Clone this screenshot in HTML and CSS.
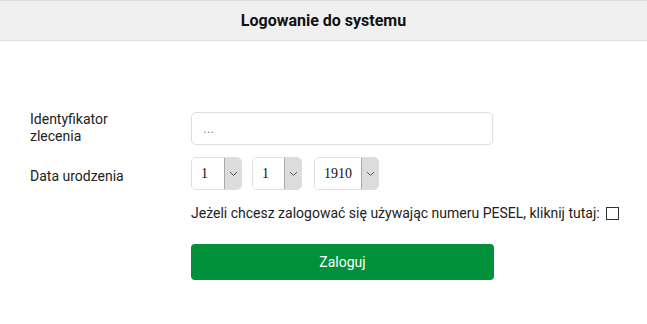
FILE: index.html
```html
<!DOCTYPE html>
<html>

<head>
    <meta charset="UTF-8">
    <meta name="viewport" content="width=device-width, initial-scale=1.0">
    <title>Logowanie do systemu</title>
    <link rel="stylesheet" href="styles.css">
</head>

<body>
    <div class="header">Logowanie do systemu</div>

    <form class="login-form">
        <div class="row">
            <label for="ident" class="label">Identyfikator<br>zlecenia</label>
            <input type="text" id="ident" class="text-input" placeholder="...">
        </div>

        <div class="row">
            <span class="label date-label">Data urodzenia</span>
            <div class="date-selects">
                <div class="select-box day">
                    <select>
                        <option>1</option>
                    </select>
                    <span class="arrow">
                        <svg width="9" height="6" viewBox="0 0 9 6"><path d="M1 1l3.5 3.5L8 1" fill="none" stroke="#555" stroke-width="1"/></svg>
                    </span>
                </div>
                <div class="select-box month">
                    <select>
                        <option>1</option>
                    </select>
                    <span class="arrow">
                        <svg width="9" height="6" viewBox="0 0 9 6"><path d="M1 1l3.5 3.5L8 1" fill="none" stroke="#555" stroke-width="1"/></svg>
                    </span>
                </div>
                <div class="select-box year">
                    <select>
                        <option>1910</option>
                    </select>
                    <span class="arrow">
                        <svg width="9" height="6" viewBox="0 0 9 6"><path d="M1 1l3.5 3.5L8 1" fill="none" stroke="#555" stroke-width="1"/></svg>
                    </span>
                </div>
            </div>
        </div>

        <div class="row">
            <span class="label"></span>
            <label class="pesel">Jeżeli chcesz zalogować się używając numeru PESEL, kliknij tutaj: <input type="checkbox" class="check"></label>
        </div>

        <div class="row">
            <span class="label"></span>
            <button type="submit" class="submit">Zaloguj</button>
        </div>
    </form>
</body>

</html>
```

FILE: styles.css
```css
body {
    margin: 0;
    font-family: Roboto, Arial, sans-serif;
    color: #222;
    background: #fff;
}

.header {
    height: 39px;
    line-height: 39px;
    text-align: center;
    font-size: 16px;
    font-weight: bold;
    color: #111;
    background-color: #f0f0f0;
    border-top: 1px solid #ddd;
    border-bottom: 1px solid #ddd;
}

.login-form {
    padding: 70px 0 0 30px;
}

.row {
    display: grid;
    grid-template-columns: 161px auto;
    align-items: center;
    margin-bottom: 12px;
}

.label {
    font-size: 14px;
    line-height: 17px;
}

.date-label {
    padding-top: 5px;
}

.text-input {
    width: 302px;
    height: 33px;
    box-sizing: border-box;
    border: 1px solid #ddd;
    border-radius: 5px;
    padding: 0 11px;
    font-size: 14px;
    font-family: Roboto, Arial, sans-serif;
}

.text-input::placeholder {
    color: #888;
}

.date-selects {
    display: flex;
    gap: 10px;
}

.select-box {
    display: flex;
    height: 33px;
    box-sizing: border-box;
    border: 1px solid #ddd;
    border-radius: 5px;
    overflow: hidden;
}

.select-box select {
    appearance: none;
    -webkit-appearance: none;
    border: none;
    background: #fff;
    padding: 0 0 0 9px;
    font-family: "Liberation Serif", "Times New Roman", serif;
    font-size: 14px;
    color: #111;
    outline: none;
}

.day select { width: 32px; }
.month select { width: 31px; }
.year select { width: 46px; }

.year { margin-left: 2px; }

.arrow {
    width: 17px;
    box-sizing: border-box;
    display: flex;
    align-items: center;
    justify-content: center;
    background-color: #dcdcdc;
    border-left: 1px solid #aaa;
}

.pesel {
    font-size: 14px;
    line-height: 17px;
    display: flex;
    align-items: center;
    gap: 6px;
    margin-top: 3px;
}

.check {
    appearance: none;
    -webkit-appearance: none;
    width: 13px;
    height: 13px;
    margin: 0;
    border: 1px solid #333;
    background: #fff;
}

.submit {
    width: 303px;
    height: 36px;
    margin-top: 10px;
    border: none;
    border-radius: 4px;
    background-color: #00913a;
    color: #fff;
    font-family: Roboto, Arial, sans-serif;
    font-size: 14px;
    cursor: pointer;
}
```
